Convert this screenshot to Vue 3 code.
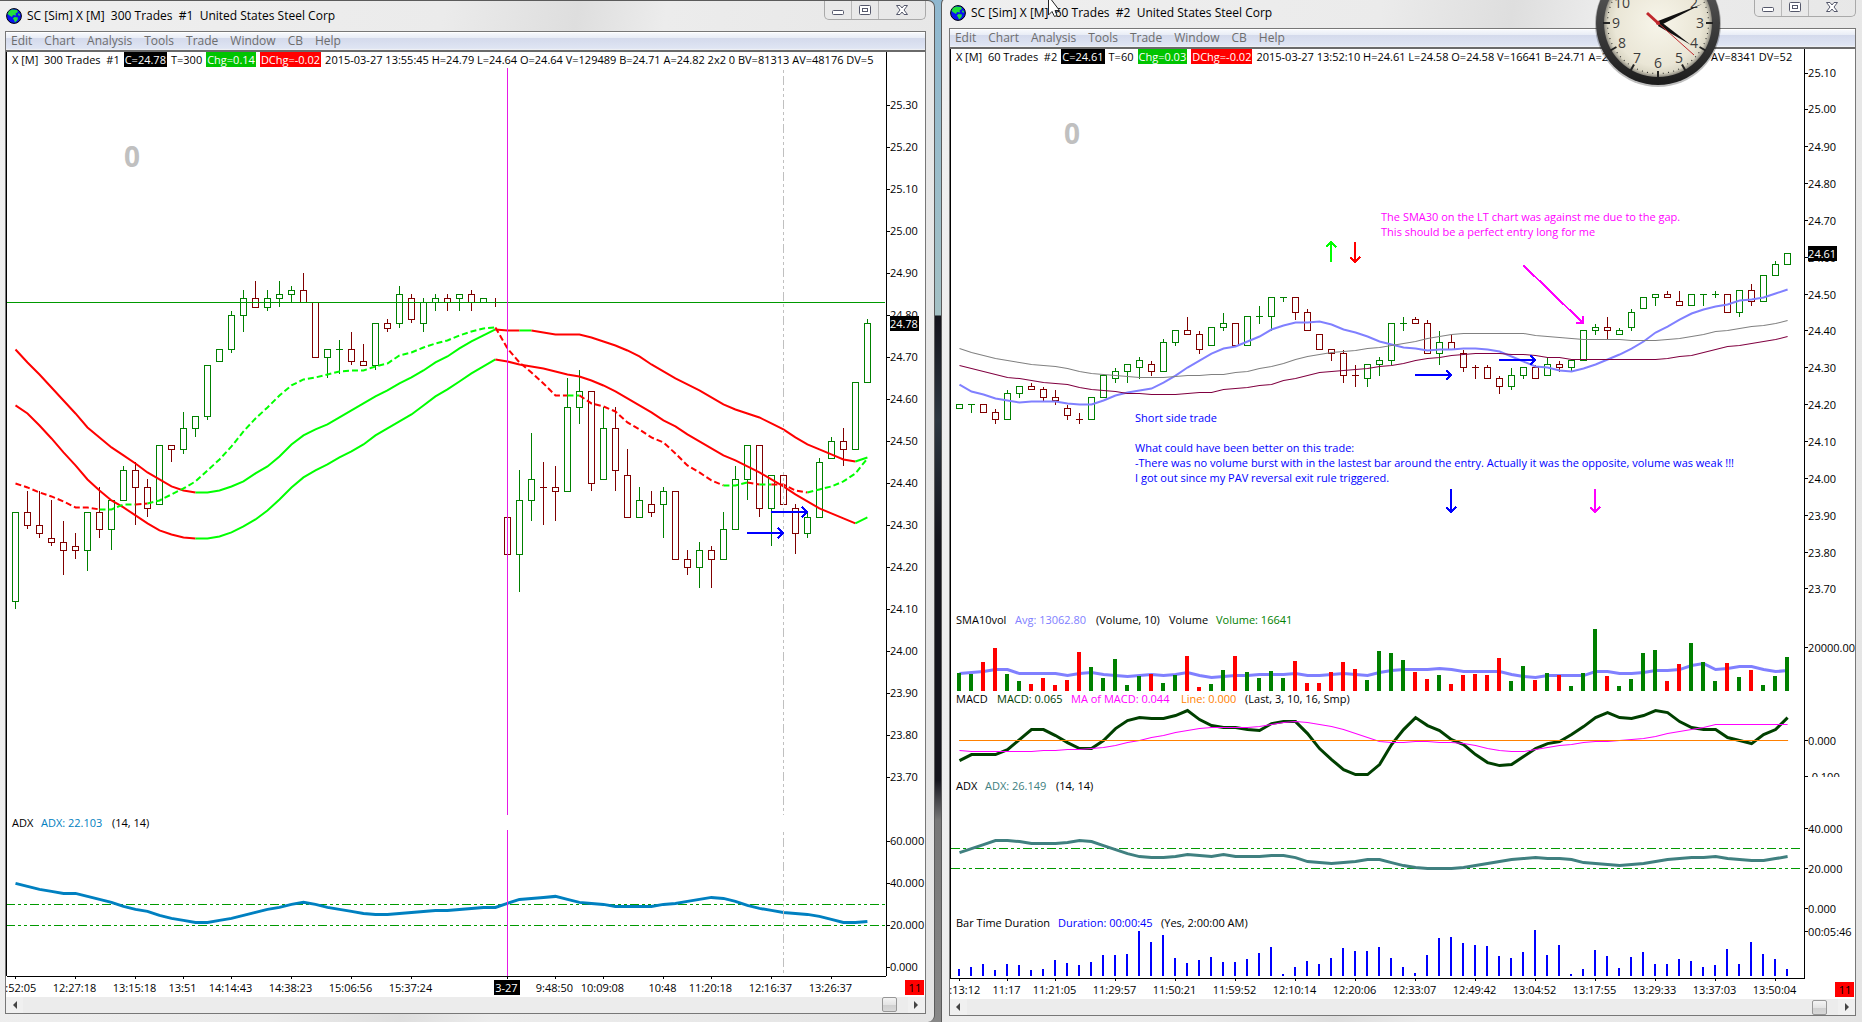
<template>
  <div class="desktop">
    <section v-for="win in windows" :key="win.id" class="window" :class="win.id">
      <header class="titlebar">
        <svg class="globe" viewBox="0 0 16 16">
          <circle cx="8" cy="8" r="7.4" fill="#0a14f0" stroke="#000" />
          <path d="M3 3 L6 1.4 L11 2 L12 4 L9.5 5.5 L10 7.5 L7 7 L6 9 L3.5 7.5 L1.6 6 Z" fill="#22e03c" />
          <path d="M8.5 9 L12 9.5 L11.5 12 L9 14.4 L8 12 L6.8 10.5 Z" fill="#22e03c" />
          <path d="M12.5 5 L14 6.5 L13.6 8 L12 7 Z" fill="#22e03c" />
        </svg>
        <h1>{{ win.title }}</h1>
        <div class="controls">
          <button aria-label="Minimize">
            <svg viewBox="0 0 14 12"><rect x="1.5" y="6.5" width="11" height="4" rx="1" /></svg>
          </button>
          <button aria-label="Restore">
            <svg viewBox="0 0 14 12">
              <rect x="1.5" y="1.5" width="11" height="9" rx="1" />
              <rect x="4.5" y="4.5" width="5" height="3" />
            </svg>
          </button>
          <button class="close" aria-label="Close">
            <svg viewBox="0 0 14 12">
              <path d="M1.5 1.5 H5 L7 4 L9 1.5 H12.5 L9 6 L12.5 10.5 H9 L7 8 L5 10.5 H1.5 L5 6 Z" />
            </svg>
          </button>
        </div>
      </header>

      <main class="client">
        <nav class="menu">
          <button v-for="item in menuItems" :key="item">{{ item }}</button>
        </nav>

        <div class="quote">
          <p>
            <span>{{ win.quote.symbol }}</span>
            <mark class="last">{{ win.quote.last }}</mark>
            <span>{{ win.quote.trades }}</span>
            <mark class="up">{{ win.quote.chg }}</mark>
            <mark class="down">{{ win.quote.dchg }}</mark>
            <span>{{ win.quote.rest }}</span>
          </p>
        </div>

        <svg class="chart" :viewBox="win.viewBox">
          <text class="counter" :x="win.counter[0]" :y="win.counter[1]">0</text>

          <!-- price bars -->
          <g v-for="bar in win.bars" :key="bar.x" class="bar" :class="bar.trend">
            <line :x1="bar.x" :x2="bar.x" :y1="bar.high" :y2="bar.low" />
            <rect v-if="bar.height" :x="bar.x - 3" :y="bar.top" width="6" :height="bar.height" />
            <line v-else :x1="bar.x - 3.5" :x2="bar.x + 3.5" :y1="bar.top" :y2="bar.top" />
          </g>

          <path v-for="(rule, i) in win.rules" :key="'r' + i" :d="rule.d" :class="rule.kind" />

          <polyline
            v-for="(line, i) in win.lines"
            :key="'l' + i"
            :points="line.points"
            :stroke="line.color"
            :stroke-width="line.width"
            :stroke-dasharray="line.dash"
            fill="none"
          />

          <rect
            v-for="(col, i) in win.columns"
            :key="'c' + i"
            :x="col.x"
            :y="col.y"
            :width="col.width"
            :height="col.height"
            :fill="col.color"
          />

          <path v-if="win.overlay" :d="win.overlay" class="session" />
          <path v-if="win.marker" :d="win.marker" class="marker" />

          <path v-for="(arrow, i) in win.arrows" :key="'a' + i" class="arrow" :d="arrow.d" :stroke="arrow.color" />

          <text v-for="(note, i) in win.notes" :key="'n' + i" :x="note.x" :y="note.y" :fill="note.color">
            {{ note.text }}
          </text>

          <text v-for="study in win.studies" :key="study.y" :y="study.y">
            <tspan v-for="part in study.parts" :key="part[0]" :x="part[0]" :fill="part[2] || '#000'">{{ part[1] }}</tspan>
          </text>

          <!-- axes -->
          <path class="axis" :d="win.axis" />
          <g v-for="tick in win.scale" :key="'s' + tick.y">
            <line class="axis" :x1="win.axisX" :x2="win.axisX + 3" :y1="tick.y" :y2="tick.y" />
            <text :x="win.axisX + 3" :y="tick.y + 4">{{ tick.label }}</text>
          </g>
          <rect v-if="win.cut" :x="win.axisX + 1" :y="win.cut" width="50" height="12" fill="#fff" />
          <rect :x="win.axisX + 3" :y="win.badge.y" width="29" height="15" />
          <text class="inverse" :x="win.axisX + 3" :y="win.badge.y + 12">{{ win.badge.text }}</text>

          <g v-for="tick in win.times" :key="tick.label">
            <line class="axis" :x1="tick.x" :x2="tick.x" :y1="win.base" :y2="win.base + 3" />
            <rect v-if="tick.day" :x="tick.x - 13" :y="win.base + 4" width="26" height="15" />
            <text class="time" :class="{ inverse: tick.day }" :x="tick.x - 1" :y="win.base + 16">{{ tick.label }}</text>
          </g>
          <rect :x="win.right - 20" :y="win.base + 4" width="19" height="15" fill="#f00" />
          <text class="time" :x="win.right - 10" :y="win.base + 16">11</text>
        </svg>

        <div class="scrollbar">
          <button aria-label="Scroll left"><i class="arrow-left"></i></button>
          <div class="thumb"></div>
          <button aria-label="Scroll right"><i class="arrow-right"></i></button>
        </div>
      </main>
    </section>

    <svg class="clock" viewBox="-66 -66 132 132">
      <defs>
        <radialGradient id="face" cx="0.5" cy="0.5" r="0.5">
          <stop offset="0" stop-color="#f7f5ea" />
          <stop offset="0.8" stop-color="#eae6d6" />
          <stop offset="0.93" stop-color="#dcd8c6" />
          <stop offset="1" stop-color="#8d8a80" />
        </radialGradient>
        <linearGradient id="rim" x1="0" y1="0" x2="0" y2="1">
          <stop offset="0" stop-color="#666" />
          <stop offset="0.6" stop-color="#393939" />
          <stop offset="1" stop-color="#1c1c1c" />
        </linearGradient>
      </defs>
      <circle r="63" cy="1" fill="#000" opacity="0.25" />
      <circle r="62" fill="url(#rim)" />
      <circle r="54" fill="url(#face)" />
      <line
        v-for="n in 60"
        :key="n"
        :y1="n % 5 ? -51 : -55"
        :y2="n % 5 ? -50 : -48"
        :stroke-width="n % 5 ? 1 : 2"
        stroke="#222"
        :transform="`rotate(${n * 6})`"
      />
      <text v-for="h in clockHours" :key="h.n" :x="h.x" :y="h.y">{{ h.n }}</text>
      <path d="M0 -2 L44 -19 L1 3 Z" fill="#111" />
      <path d="M2 -2 L33 22 L0 3 Z" fill="#111" />
      <path d="M-11 -10 L36 32" stroke="#c0282d" stroke-width="1" />
      <path d="M-11 -10 L0 0" stroke="#c0282d" stroke-width="3" />
      <circle r="2" fill="#c0282d" />
    </svg>

    <svg class="cursor" viewBox="0 0 12 17">
      <path d="M0.5 -4 V15 L4 11.5 L6.5 16.5 L9 15.5 L7 10.5 H11.5 Z" fill="#fff" stroke="#222" />
    </svg>
  </div>
</template>

<script setup>
const menuItems = ['Edit', 'Chart', 'Analysis', 'Tools', 'Trade', 'Window', 'CB', 'Help'];

const RED = '#ff0000';
const GREEN = '#00ff00';
const BLUE = '#0000ff';
const MAGENTA = '#ff00ff';
const STEP = 12;

/** open, high, low, close in cents */
const trades300 = [
  [2412, 2433, 2410, 2433], [2433, 2438, 2429, 2430], [2430, 2438, 2427, 2428], [2427, 2436, 2425, 2426],
  [2426, 2431, 2418, 2424], [2425, 2428, 2422, 2424], [2424, 2433, 2419, 2433], [2433, 2439, 2427, 2429],
  [2429, 2436, 2424, 2436], [2436, 2444, 2436, 2443], [2443, 2445, 2430, 2439], [2439, 2441, 2432, 2434],
  [2435, 2449, 2435, 2449], [2449, 2449, 2445, 2448], [2448, 2457, 2447, 2453], [2453, 2456, 2451, 2456],
  [2456, 2468, 2455, 2468], [2469, 2472, 2469, 2472], [2472, 2481, 2471, 2480], [2480, 2486, 2476, 2484],
  [2484, 2488, 2482, 2482], [2482, 2486, 2481, 2484], [2484, 2488, 2482, 2485], [2485, 2487, 2483, 2486],
  [2486, 2490, 2483, 2483], [2483, 2483, 2470, 2470], [2470, 2472, 2465, 2472], [2472, 2474, 2466, 2472],
  [2472, 2476, 2468, 2469], [2469, 2473, 2468, 2468], [2468, 2478, 2467, 2478], [2478, 2479, 2476, 2477],
  [2478, 2487, 2477, 2485], [2484, 2485, 2478, 2479], [2478, 2484, 2476, 2483], [2483, 2485, 2481, 2484],
  [2484, 2485, 2481, 2483], [2484, 2485, 2481, 2485], [2485, 2486, 2481, 2483], [2483, 2484, 2483, 2484],
  [2483, 2484, 2482, 2483], [2432, 2432, 2423, 2423], [2423, 2443, 2414, 2436], [2436, 2452, 2431, 2441],
  [2439, 2445, 2430, 2439], [2439, 2444, 2431, 2438], [2438, 2465, 2438, 2458], [2458, 2467, 2454, 2462],
  [2462, 2462, 2438, 2440], [2441, 2458, 2441, 2453], [2453, 2458, 2438, 2443], [2442, 2448, 2432, 2432],
  [2432, 2439, 2432, 2436], [2435, 2438, 2432, 2433], [2435, 2439, 2427, 2438], [2438, 2438, 2422, 2422],
  [2422, 2424, 2418, 2420], [2420, 2426, 2415, 2424], [2424, 2425, 2415, 2422], [2422, 2433, 2422, 2429],
  [2429, 2444, 2429, 2441], [2441, 2449, 2436, 2449], [2449, 2449, 2432, 2434], [2434, 2442, 2425, 2442],
  [2442, 2442, 2435, 2435], [2434, 2435, 2423, 2428], [2428, 2433, 2427, 2432], [2432, 2446, 2432, 2445],
  [2446, 2451, 2446, 2450], [2450, 2453, 2444, 2448], [2448, 2464, 2448, 2464], [2464, 2479, 2464, 2478],
];

const trades60 = [
  [2419, 2420, 2419, 2420], [2420, 2420, 2418, 2420], [2420, 2420, 2418, 2418], [2418, 2419, 2415, 2416],
  [2416, 2424, 2416, 2423], [2423, 2425, 2422, 2425], [2425, 2426, 2424, 2424], [2424, 2425, 2421, 2422],
  [2422, 2424, 2420, 2421], [2419, 2420, 2416, 2417], [2416, 2418, 2415, 2416], [2416, 2422, 2416, 2422],
  [2422, 2428, 2422, 2428], [2427, 2430, 2426, 2429], [2429, 2431, 2426, 2431], [2430, 2433, 2427, 2432],
  [2431, 2432, 2428, 2429], [2429, 2438, 2429, 2437], [2437, 2440, 2436, 2440], [2440, 2444, 2439, 2439],
  [2439, 2440, 2434, 2435], [2436, 2441, 2436, 2441], [2441, 2445, 2440, 2442], [2442, 2442, 2436, 2436],
  [2436, 2444, 2436, 2444], [2444, 2447, 2442, 2444], [2444, 2449, 2440, 2449], [2449, 2449, 2448, 2449],
  [2449, 2449, 2443, 2445], [2445, 2446, 2440, 2440], [2439, 2439, 2435, 2435], [2435, 2435, 2432, 2434],
  [2434, 2435, 2426, 2428], [2428, 2431, 2425, 2428], [2427, 2431, 2425, 2431], [2431, 2433, 2428, 2432],
  [2432, 2442, 2431, 2442], [2442, 2444, 2440, 2442], [2443, 2444, 2442, 2442], [2442, 2443, 2434, 2434],
  [2434, 2440, 2431, 2437], [2437, 2439, 2435, 2435], [2434, 2435, 2429, 2430], [2430, 2431, 2427, 2430],
  [2430, 2431, 2427, 2427], [2427, 2428, 2423, 2425], [2425, 2430, 2424, 2428], [2428, 2430, 2427, 2430],
  [2430, 2431, 2427, 2427], [2428, 2433, 2428, 2431], [2431, 2432, 2429, 2430], [2430, 2432, 2429, 2432],
  [2432, 2440, 2432, 2440], [2440, 2442, 2439, 2441], [2441, 2444, 2438, 2440], [2439, 2441, 2439, 2440],
  [2441, 2446, 2440, 2445], [2446, 2449, 2446, 2449], [2449, 2450, 2447, 2450], [2450, 2451, 2449, 2449],
  [2448, 2451, 2447, 2447], [2447, 2450, 2447, 2450], [2450, 2450, 2447, 2450], [2450, 2451, 2449, 2450],
  [2450, 2450, 2445, 2445], [2445, 2451, 2444, 2451], [2451, 2453, 2447, 2448], [2448, 2455, 2448, 2455],
  [2455, 2459, 2455, 2458], [2458, 2461, 2458, 2461],
];

/** study lines, one y per bar */
const upper = [
  349, 362, 374, 387, 400, 413, 427, 437, 447, 455, 463, 472, 479, 486, 490, 492, 492, 490, 486, 481, 473, 466, 456, 444,
  435, 429, 424, 417, 410, 403, 396, 390, 383, 377, 370, 362, 356, 348, 341, 335, 329, 330, 330, 330, 332, 334, 334, 334,
  337, 341, 345, 350, 356, 364, 371, 378, 384, 390, 397, 404, 409, 413, 417, 423, 429, 437, 444, 449, 454, 459, 461, 457,
];
const lower = [
  405, 413, 425, 438, 452, 465, 479, 490, 500, 507, 515, 523, 530, 534, 537, 538, 538, 536, 532, 526, 519, 510, 499, 487,
  477, 470, 464, 457, 451, 444, 435, 428, 421, 414, 405, 396, 389, 381, 373, 366, 359, 361, 364, 366, 368, 371, 374, 376,
  380, 385, 391, 398, 405, 412, 420, 426, 434, 441, 448, 455, 460, 466, 472, 479, 486, 494, 501, 508, 513, 518, 523, 517,
];
const fast = [
  483, 487, 492, 496, 501, 507, 507, 509, 509, 504, 504, 503, 500, 494, 488, 481, 470, 459, 446, 431, 418, 407, 395, 385,
  379, 377, 374, 371, 370, 370, 366, 363, 355, 352, 347, 343, 340, 335, 331, 328, 327, 348, 362, 372, 383, 395, 395, 395,
  403, 406, 411, 422, 429, 437, 442, 453, 465, 472, 480, 485, 485, 482, 484, 484, 484, 490, 492, 489, 486, 481, 473, 458,
];
const adx300 = [
  883, 886, 889, 891, 893, 893, 896, 899, 902, 906, 909, 911, 915, 918, 920, 922, 922, 920, 918, 915, 912, 909, 907, 904,
  902, 904, 907, 909, 911, 913, 914, 914, 913, 912, 911, 910, 910, 909, 908, 907, 907, 903, 899, 898, 897, 896, 899, 902,
  903, 904, 906, 906, 906, 906, 904, 903, 901, 899, 897, 898, 901, 905, 908, 910, 912, 913, 914, 916, 919, 922, 922, 921,
];

const sma10 = [
  384, 391, 394, 398, 400, 402, 401, 401, 401, 403, 404, 404, 400, 395, 392, 390, 388, 382, 375, 367, 360, 353, 348, 346,
  341, 336, 329, 325, 322, 322, 321, 324, 329, 332, 336, 341, 344, 347, 348, 350, 349, 349, 348, 348, 349, 351, 356, 361,
  366, 367, 370, 371, 368, 364, 359, 354, 348, 341, 332, 326, 319, 313, 309, 306, 304, 300, 299, 297, 293, 289,
];
const sma30 = [
  348, 352, 355, 358, 360, 362, 364, 365, 366, 368, 371, 373, 374, 375, 376, 377, 377, 377, 376, 375, 375, 374, 374, 372,
  371, 368, 366, 363, 359, 356, 354, 352, 351, 350, 348, 347, 345, 343, 341, 338, 336, 334, 333, 333, 333, 333, 333, 333,
  335, 336, 337, 338, 339, 339, 339, 339, 340, 340, 340, 339, 338, 336, 334, 331, 330, 328, 326, 325, 323, 320,
];
const sma50 = [
  365, 368, 371, 374, 377, 378, 380, 382, 383, 384, 387, 389, 390, 391, 393, 393, 394, 394, 394, 393, 392, 392, 389, 388,
  387, 385, 384, 380, 378, 375, 372, 371, 370, 369, 368, 366, 365, 363, 360, 358, 357, 355, 354, 353, 353, 353, 354, 354,
  355, 357, 357, 359, 359, 359, 359, 359, 359, 359, 359, 358, 356, 355, 352, 349, 346, 345, 343, 341, 339, 336,
];
const volumeAvg = [
  673, 672, 671, 669, 669, 673, 673, 673, 673, 675, 673, 672, 674, 675, 676, 675, 674, 675, 674, 672, 675, 677, 676, 675,
  675, 674, 674, 674, 673, 675, 675, 674, 673, 674, 675, 672, 670, 669, 669, 669, 668, 669, 671, 671, 671, 671, 674, 676,
  677, 675, 675, 675, 675, 671, 671, 673, 673, 672, 670, 670, 669, 665, 663, 669, 668, 666, 666, 669, 671, 670,
];
const macd = [
  760, 754, 754, 754, 749, 739, 729, 729, 735, 742, 748, 748, 740, 728, 720, 717, 718, 718, 715, 710, 719, 725, 727, 727,
  729, 730, 723, 721, 721, 733, 748, 759, 769, 774, 774, 764, 744, 729, 717, 725, 730, 739, 744, 754, 762, 765, 764, 756,
  748, 743, 741, 734, 726, 717, 712, 717, 718, 715, 710, 712, 721, 727, 729, 729, 737, 740, 743, 734, 729, 717,
];
const macdAvg = [
  750, 751, 751, 751, 751, 751, 751, 750, 750, 749, 749, 748, 747, 745, 742, 740, 737, 735, 732, 730, 728, 727, 727, 727,
  727, 726, 724, 722, 721, 722, 724, 726, 729, 733, 737, 741, 742, 742, 741, 741, 742, 742, 743, 745, 748, 750, 751, 751,
  749, 747, 745, 744, 742, 741, 741, 740, 739, 738, 736, 733, 731, 729, 727, 724, 724, 724, 724, 724, 724, 724,
];
const adx60 = [
  852, 848, 844, 840, 840, 841, 843, 843, 843, 842, 840, 841, 845, 849, 853, 856, 857, 857, 856, 854, 855, 856, 854, 856,
  856, 856, 855, 855, 857, 861, 862, 863, 862, 861, 859, 859, 862, 865, 867, 868, 868, 868, 867, 865, 863, 861, 859, 858,
  857, 858, 858, 859, 862, 863, 864, 865, 864, 863, 861, 859, 858, 857, 857, 856, 858, 859, 860, 860, 858, 856,
];

/** column heights */
const volume = [
  18, 17, 29, 43, 17, 10, 7, 13, 6, 11, 39, 24, 13, 32, 6, 15, 17, 8, 16, 35, 4, 7, 21, 35, 19, 13, 20, 13, 30, 8, 8, 19,
  29, 22, 11, 40, 38, 31, 19, 12, 16, 7, 16, 17, 16, 33, 10, 25, 11, 18, 16, 5, 18, 62, 15, 5, 12, 38, 41, 10, 27, 48, 29,
  10, 28, 14, 21, 6, 15, 34,
];
const duration = [
  7, 9, 12, 6, 12, 11, 6, 7, 16, 13, 11, 14, 21, 21, 22, 45, 34, 41, 18, 13, 16, 19, 14, 14, 17, 23, 29, 2, 9, 15, 12, 18,
  28, 25, 25, 29, 18, 9, 3, 21, 38, 39, 33, 31, 30, 20, 18, 24, 46, 21, 31, 2, 7, 26, 20, 8, 19, 24, 12, 12, 17, 15, 9, 11,
  27, 12, 34, 22, 17, 7,
];

const LEFT_X = 15.5;
const RIGHT_X = 959.5;
const leftY = (cents) => Math.floor(105.5 + (2530 - cents) * 4.2) + 0.5;
const rightY = (cents) => Math.floor(73 + (2510 - cents) * 3.685) + 0.5;

const buildBars = (rows, x0, y) => {
  let trend = 'rise';
  let last = rows[0][0];
  return rows.map(([open, high, low, close], i) => {
    // a flat bar takes its side from the previous close
    const from = open === close ? last : open;
    if (close !== from) trend = close > from ? 'rise' : 'fall';
    last = close;
    const top = y(Math.max(open, close));
    return { x: x0 + i * STEP, high: y(high), low: y(low), top, height: y(Math.min(open, close)) - top, trend };
  });
};

const buildLine = (values, x0, color, width, dash) => ({
  points: values.map((v, i) => `${x0 + i * STEP},${v + 0.5}`).join(' '),
  color,
  width,
  dash,
});

/** splits a line in coloured runs; stops = indexes where the colour flips, first run is red */
const buildRuns = (values, stops, width, dash) =>
  stops.slice(1).map((end, i) => {
    const start = stops[i];
    return buildLine(values.slice(start, end + 1), LEFT_X + start * STEP, i % 2 ? GREEN : RED, width, dash);
  });

const buildPrices = (from, to, y) => {
  const ticks = [];
  for (let p = from; p >= to; p -= 10) ticks.push({ y: y(p), label: (p / 100).toFixed(2) });
  return ticks;
};

const buildTimes = (list, x0) => list.map(([i, label, day]) => ({ x: x0 + i * STEP, label, day }));

const arrowRight = (x, y, color) => ({ d: `M${x} ${y} h36 m-5 -5 l5 5 l-5 5`, color });
const arrowDown = (x, y, h, color) => ({ d: `M${x} ${y} v${h} m-5 -5 l5 5 l5 -5`, color });

const rightBars = buildBars(trades60, RIGHT_X, rightY);

const windows = [
  {
    id: 'first',
    title: 'SC [Sim] X [M]\u00a0 300 Trades\u00a0 #1\u00a0 United States Steel Corp',
    quote: {
      symbol: 'X [M]\u00a0 300 Trades\u00a0 #1',
      last: 'C=24.78',
      trades: 'T=300',
      chg: 'Chg=0.14',
      dchg: 'DChg=-0.02',
      rest: '2015-03-27 13:55:45 H=24.79 L=24.64 O=24.64 V=129489 B=24.71 A=24.82 2x2 0 BV=81313 AV=48176 DV=5',
    },
    viewBox: '6 68 919 929',
    counter: [124, 167],
    bars: buildBars(trades300, LEFT_X, leftY),
    rules: [
      { kind: 'level', d: `M6 ${leftY(2483)} H885` },
      { kind: 'band', d: 'M6 904.5 H885 M6 925.5 H885' },
    ],
    lines: [
      ...buildRuns(upper, [0, 15, 40, 42, 43, 70, 71], 2),
      ...buildRuns(lower, [0, 15, 40, 70, 71], 2),
      ...buildRuns(fast, [0, 7, 10, 11, 40, 46, 47, 59, 61, 62, 63, 66, 71], 2, '6 3'),
      buildLine(adx300, LEFT_X, '#0080c0', 3),
    ],
    columns: [],
    overlay: 'M507.5 67 V815 M507.5 830 V976',
    marker: 'M783.5 70 V815 M783.5 832 V973',
    arrows: [arrowRight(771, 512, BLUE), arrowRight(747, 533, BLUE)],
    notes: [],
    studies: [{ y: 827, parts: [[12, 'ADX'], [41, 'ADX: 22.103', '#0080c0'], [112, '(14, 14)']] }],
    axis: 'M6.5 68 V976.5 H886.5 V68',
    axisX: 887,
    scale: [
      ...buildPrices(2530, 2370, leftY),
      { y: 841.5, label: '60.000' },
      { y: 883.5, label: '40.000' },
      { y: 925.5, label: '20.000' },
      { y: 967.5, label: '0.000' },
    ],
    badge: { y: 316, text: '24.78' },
    base: 976,
    right: 925,
    times: buildTimes(
      [
        [0, '11:52:05'], [5, '12:27:18'], [10, '13:15:18'], [14, '13:51'], [18, '14:14:43'], [23, '14:38:23'],
        [28, '15:06:56'], [33, '15:37:24'], [41, '3-27', true], [45, '9:48:50'], [49, '10:09:08'], [54, '10:48'],
        [58, '11:20:18'], [63, '12:16:37'], [68, '13:26:37'],
      ],
      LEFT_X
    ),
  },
  {
    id: 'second',
    title: 'SC [Sim] X [M]\u00a0 60 Trades\u00a0 #2\u00a0 United States Steel Corp',
    quote: {
      symbol: 'X [M]\u00a0 60 Trades\u00a0 #2',
      last: 'C=24.61',
      trades: 'T=60',
      chg: 'Chg=0.03',
      dchg: 'DChg=-0.02',
      rest: '2015-03-27 13:52:10 H=24.61 L=24.58 O=24.58 V=16641 B=24.71 A=24.82 2x2 0 BV=8300 AV=8341 DV=52',
    },
    viewBox: '950 65 905 934',
    counter: [1064, 144],
    bars: rightBars,
    rules: [{ kind: 'band', d: 'M951 848.5 H1800 M951 868.5 H1800' }],
    lines: [
      buildLine(sma10, RIGHT_X, '#8080ff', 2),
      buildLine(sma30, RIGHT_X, '#808080', 1),
      buildLine(sma50, RIGHT_X, '#800040', 1),
      buildLine(volumeAvg, RIGHT_X, '#8080ff', 3),
      buildLine(macd, RIGHT_X, '#004000', 3),
      buildLine(macdAvg, RIGHT_X, MAGENTA, 1),
      { points: '959,740.5 1788,740.5', color: '#ff8000', width: 1 },
      buildLine(adx60, RIGHT_X, '#408080', 3),
    ],
    columns: [
      ...volume.map((h, i) => ({
        x: 957 + i * STEP,
        y: 691 - h,
        width: 4,
        height: h,
        color: rightBars[i].trend === 'rise' ? '#008000' : RED,
      })),
      ...duration.map((h, i) => ({ x: 958 + i * STEP, y: 976 - h, width: 2, height: h, color: BLUE })),
    ],
    arrows: [
      { d: 'M1331 262 v-20 m-5 5 l5 -5 l5 5', color: GREEN },
      arrowDown(1355, 242, 20, RED),
      { d: 'M1523 265 L1583 323 m-7 0 h7 v-7', color: MAGENTA },
      arrowRight(1415, 375, BLUE),
      arrowRight(1499, 360, BLUE),
      arrowDown(1451, 489, 23, BLUE),
      arrowDown(1595, 489, 23, MAGENTA),
    ],
    notes: [
      { x: 1381, y: 221, color: MAGENTA, text: 'The SMA30 on the LT chart was against me due to the gap.' },
      { x: 1381, y: 236, color: MAGENTA, text: 'This should be a perfect entry long for me' },
      { x: 1135, y: 422, color: BLUE, text: 'Short side trade' },
      { x: 1135, y: 452, color: BLUE, text: 'What could have been better on this trade:' },
      {
        x: 1135,
        y: 467,
        color: BLUE,
        text: '-There was no volume burst with in the lastest bar around the entry. Actually it was the opposite, volume was weak !!!',
      },
      { x: 1135, y: 482, color: BLUE, text: 'I got out since my PAV reversal exit rule triggered.' },
    ],
    studies: [
      {
        y: 624,
        parts: [
          [956, 'SMA10vol'], [1015, 'Avg: 13062.80', '#8080ff'], [1096, '(Volume, 10)'], [1169, 'Volume'],
          [1216, 'Volume: 16641', '#008000'],
        ],
      },
      {
        y: 703,
        parts: [
          [956, 'MACD'], [997, 'MACD: 0.065', '#004000'], [1071, 'MA of MACD: 0.044', MAGENTA],
          [1181, 'Line: 0.000', '#ff8000'], [1245, '(Last, 3, 10, 16, Smp)'],
        ],
      },
      { y: 790, parts: [[956, 'ADX'], [985, 'ADX: 26.149', '#408080'], [1056, '(14, 14)']] },
      { y: 927, parts: [[956, 'Bar Time Duration'], [1058, 'Duration: 00:00:45', BLUE], [1161, '(Yes, 2:00:00 AM)']] },
    ],
    axis: 'M950.5 65 V978.5 H1804.5 V65',
    axisX: 1805,
    scale: [
      ...buildPrices(2510, 2370, rightY),
      { y: 647.5, label: '20000.00' },
      { y: 740.5, label: '0.000' },
      { y: 776.5, label: '-0.100' },
      { y: 828.5, label: '40.000' },
      { y: 868.5, label: '20.000' },
      { y: 908.5, label: '0.000' },
      { y: 931.5, label: '00:05:46' },
    ],
    cut: 777,
    badge: { y: 246, text: '24.61' },
    base: 978,
    right: 1855,
    times: buildTimes(
      [
        [0, '11:13:12'], [4, '11:17'], [8, '11:21:05'], [13, '11:29:57'], [18, '11:50:21'], [23, '11:59:52'],
        [28, '12:10:14'], [33, '12:20:06'], [38, '12:33:07'], [43, '12:49:42'], [48, '13:04:52'], [53, '13:17:55'],
        [58, '13:29:33'], [63, '13:37:03'], [68, '13:50:04'],
      ],
      RIGHT_X
    ),
  },
];

const clockHours = Array.from({ length: 12 }, (_, i) => {
  const angle = ((i + 1) * Math.PI) / 6;
  return { n: i + 1, x: Math.round(Math.sin(angle) * 42), y: Math.round(-Math.cos(angle) * 40) + 5 };
});
</script>

<style>
body {
  margin: 0;
  background: #15151d;
}
</style>

<style scoped>
.desktop {
  position: relative;
  display: flex;
  gap: 6px;
  min-height: 100vh;
  max-height: 100vh;
  overflow: hidden;
  font-family: 'Open Sans', 'Noto Sans', sans-serif;
  font-size: 11px;
  line-height: 15px;
  background: linear-gradient(#8fb8d0, #a3c0c4 315px, #15151d 316px, #2c3640 420px, #15151d 540px, #15151d 780px, #777 820px, #888);
}

.window {
  box-sizing: border-box;
  min-width: 0;
  border-top: 1px solid #5b5b5b;
  background: linear-gradient(100deg, #efefef, #ebebeb 40%, #dedede 52%, #ececec 60%, #e4e4e4);
}

.first {
  flex: 935 1 0;
  align-self: flex-start;
  padding: 0 8px 8px 5px;
  border-right: 1px solid #5b5b5b;
  border-radius: 0 7px 7px 0;
}

.second {
  flex: 921 1 0;
  align-self: flex-start;
  margin-top: -3px;
  padding: 0 6px 12px 7px;
  border-left: 1px solid #5b5b5b;
  border-radius: 7px 0 0 7px;
}

.titlebar {
  display: flex;
  align-items: center;
  height: 30px;
}

.globe {
  width: 16px;
  height: 16px;
  margin-left: 1px;
}

h1 {
  flex: 1;
  margin: 0 0 0 5px;
  font-size: 12px;
  font-weight: 400;
  line-height: 16px;
  white-space: nowrap;
}

.controls {
  display: flex;
  align-self: flex-start;
  height: 18px;
  border: 1px solid #a9a9a9;
  border-top: 0;
  border-radius: 0 0 5px 5px;
}

.controls button {
  display: flex;
  align-items: center;
  justify-content: center;
  width: 27px;
  padding: 0;
  border: 0;
  border-right: 1px solid #b9b9b9;
  background: none;
}

.controls .close {
  width: 46px;
  border-right: 0;
}

.controls svg {
  width: 14px;
  height: 12px;
  fill: #fff;
  stroke: #55586b;
}

.client {
  border: 1px solid #777;
  background: #fff;
}

.menu {
  display: flex;
  gap: 12px;
  height: 17px;
  padding-left: 5px;
  border-bottom: 2px solid #6a6a6a;
  background: linear-gradient(#f6f8fc, #e9edf6 28%, #d4daec 32%, #dfe5f3 90%, #f4f4f4);
  border-top: 1px solid #fff;
}

.menu button {
  padding: 0 0 2px;
  border: 0;
  background: none;
  color: #6d6d6d;
  font: inherit;
  font-size: 12px;
  line-height: 15px;
}

.quote {
  height: 16px;
  border-left: 1px solid #000;
  padding-right: 38px;
}

.second .quote {
  padding-right: 50px;
}

.quote p {
  display: flex;
  gap: 4px;
  height: 16px;
  margin: 0;
  padding-left: 5px;
  overflow: hidden;
  border-right: 1px solid #000;
  white-space: nowrap;
}

.quote mark {
  height: 15px;
  padding: 0 1px;
  color: #fff;
}

.last {
  background: #000;
}

.up {
  background: #00c400;
}

.down {
  background: #f00;
}

.chart {
  display: block;
  width: 100%;
  height: auto;
  font-size: 11px;
  shape-rendering: crispEdges;
}

.chart polyline {
  shape-rendering: geometricPrecision;
}

.chart .counter {
  font-size: 28px;
  font-weight: 700;
  fill: #c0c0c0;
}

.bar rect {
  fill: #fff;
}

.rise {
  stroke: #008000;
}

.fall {
  stroke: #800000;
}

.level {
  stroke: #009900;
}

.band {
  stroke: #009900;
  stroke-dasharray: 9 3 3 3 3 3;
}

.session {
  stroke: #e619e6;
}

.marker {
  stroke: #c0c0c0;
  stroke-dasharray: 3 3 9 3 3 3;
}

.arrow {
  fill: none;
  stroke-width: 2;
}

.axis {
  fill: none;
  stroke: #000;
}

.time {
  text-anchor: middle;
}

.chart .inverse {
  fill: #fff;
}

.scrollbar {
  display: flex;
  align-items: center;
  height: 16px;
  background: #ececec;
}

.scrollbar button {
  display: flex;
  align-items: center;
  justify-content: center;
  width: 17px;
  height: 16px;
  padding: 0;
  border: 0;
  background: #f0f0f0;
}

.arrow-left,
.arrow-right {
  border: 4px solid transparent;
  border-right-color: #444;
  border-left-width: 0;
}

.arrow-right {
  border-right-width: 0;
  border-left: 4px solid #444;
}

.thumb {
  box-sizing: border-box;
  width: 15px;
  height: 15px;
  margin: 0 11px 0 auto;
  border: 1px solid #979797;
  border-radius: 2px;
  background: linear-gradient(#f4f4f4, #e4e4e4 50%, #cfcfcf 51%, #d8d8d8);
}

.clock {
  position: absolute;
  top: -43px;
  right: 138px;
  width: 132px;
  height: 132px;
  fill: none;
}

.clock text {
  fill: #3c3c3c;
  font-size: 14px;
  text-anchor: middle;
}

.cursor {
  position: absolute;
  top: 0;
  left: 1048px;
  width: 12px;
  height: 17px;
}
</style>
